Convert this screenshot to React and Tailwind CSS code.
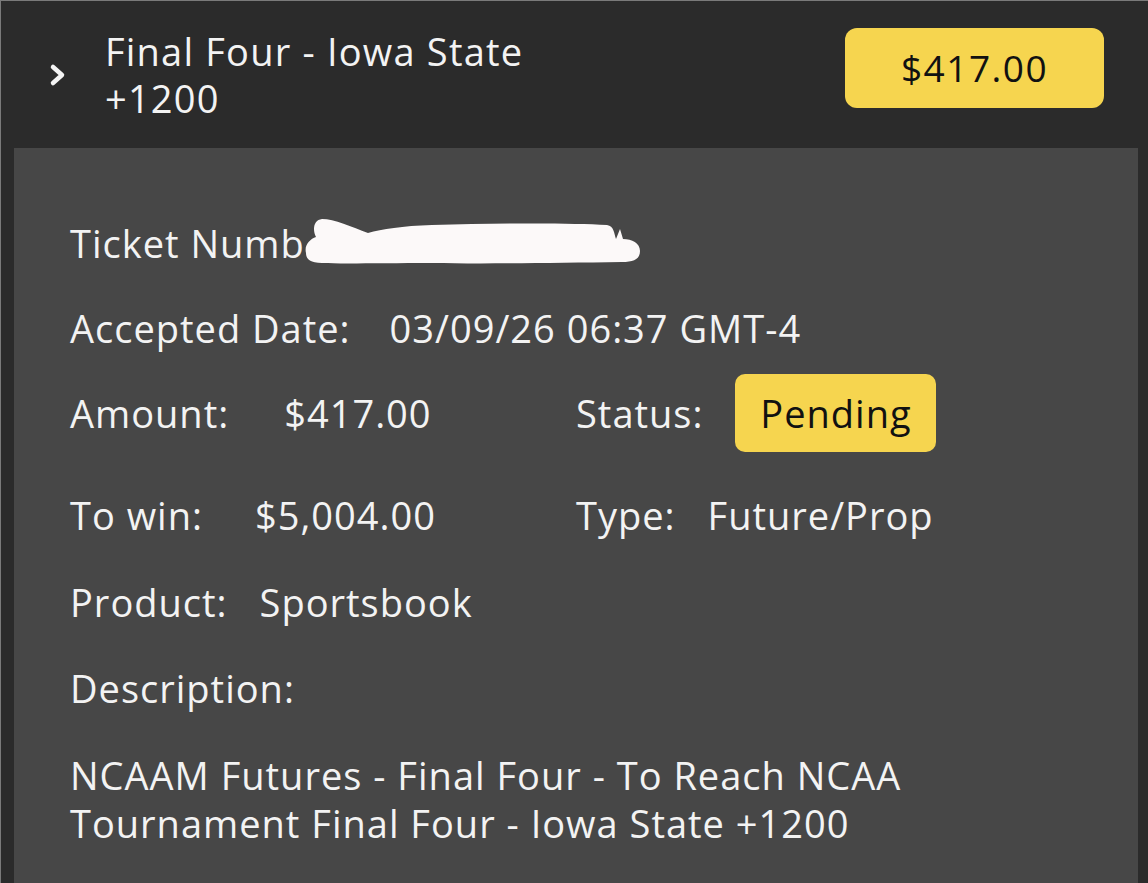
import React from 'react';

const font = { fontFamily: '"Open Sans", "Noto Sans", sans-serif' };

const Chevron = () => (
    <svg width="18" height="24" viewBox="0 0 18 24" className="shrink-0">
        <polyline points="4,4 13,12 4,20" fill="none" stroke="#f4f4f4" strokeWidth="4.5" strokeLinecap="round" strokeLinejoin="round" />
    </svg>
);

// white scribble hiding the ticket number
const Scribble = () => (
    <svg width="342" height="50" viewBox="0 0 342 50" className="-ml-[3px] -mt-[2px] shrink-0">
        <path
            d="M4 36 C 2 28, 8 22, 14 20 C 10 12, 12 3, 20 2 C 32 2, 50 10, 66 16 C 80 12, 100 9, 130 8 C 200 6, 270 6, 305 8 C 312 9, 312 16, 314 22 L 318 12 L 321 22 C 330 22, 338 26, 338 34 C 338 42, 332 45, 320 45 C 250 46, 180 47, 130 46 C 80 46, 40 47, 20 46 C 8 46, 4 42, 4 36 Z"
            fill="#fcf9f9"
        />
    </svg>
);

const App = () => {
    return (
        <div className="w-[1148px] h-[883px] overflow-hidden bg-[#2b2b2b] border-t border-l border-[#7a7a7a] text-[#f3f3f3]" style={font}>
            {/* header */}
            <div className="h-[147px] flex items-center pl-[48px] pr-[44px]">
                <Chevron />
                <div className="ml-[38px] text-[38px] leading-[47px] tracking-[1.2px] flex-1">
                    <div>Final Four - Iowa State</div>
                    <div>+1200</div>
                </div>
                <div className="w-[259px] h-[80px] -mt-[14px] rounded-[12px] bg-[#f6d54f] text-[#111] text-[37px] tracking-[1.5px] flex items-center justify-center">
                    $417.00
                </div>
            </div>

            {/* ticket details */}
            <div className="ml-[13px] mr-[10px] h-[800px] bg-[#474747] pl-[56px] pt-[71px] text-[38px] leading-[48px] tracking-[1px] flex flex-col">
                <div className="flex items-center">
                    <span>Ticket Numb</span>
                    <Scribble />
                </div>
                <div className="flex mt-[37px]">
                    <span>Accepted Date:</span>
                    <span className="ml-[39px]">03/09/26 06:37 GMT-4</span>
                </div>
                <div className="flex items-center h-[78px] mt-[22px]">
                    <div className="w-[506px] flex">
                        <span>Amount:</span>
                        <span className="ml-[55px]">$417.00</span>
                    </div>
                    <span>Status:</span>
                    <div className="ml-[32px] h-[78px] w-[201px] rounded-[10px] bg-[#f6d54f] text-[#111] flex items-center justify-center">
                        Pending
                    </div>
                </div>
                <div className="flex mt-[39px]">
                    <div className="w-[506px] flex">
                        <span>To win:</span>
                        <span className="ml-[52px]">$5,004.00</span>
                    </div>
                    <span>Type:</span>
                    <span className="ml-[32px]">Future/Prop</span>
                </div>
                <div className="flex mt-[39px]">
                    <span>Product:</span>
                    <span className="ml-[32px]">Sportsbook</span>
                </div>
                <div className="mt-[38px]">Description:</div>
                <div className="mt-[39px] w-[900px]">
                    NCAAM Futures - Final Four - To Reach NCAA Tournament Final Four - Iowa State +1200
                </div>
            </div>
        </div>
    );
};

export default App;
